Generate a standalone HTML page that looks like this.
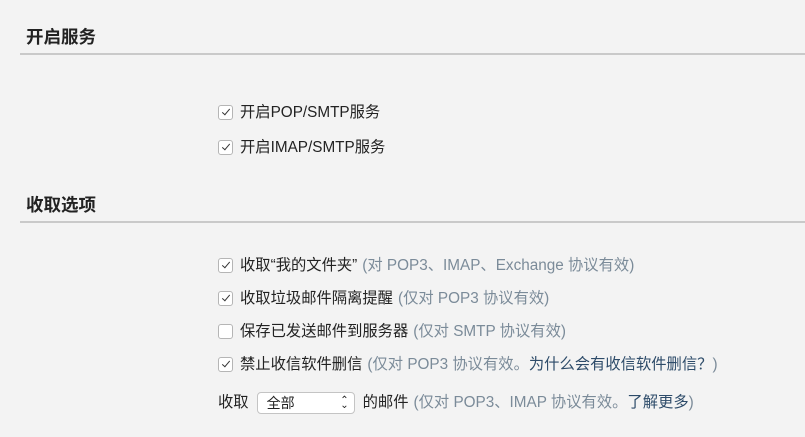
<!DOCTYPE html>
<html><head><meta charset="utf-8"><style>
body{margin:0;width:805px;height:437px;background:#f3f3f3;font-family:"Liberation Sans","Noto Sans CJK SC",sans-serif;color:#222;position:relative;overflow:hidden}
.h{position:absolute;left:26px;font-size:17.5px;font-weight:bold;line-height:20px}
.ln{position:absolute;left:20px;right:0;height:2px;background:#c9c9c9}
.r{position:absolute;left:218px;font-size:15.3px;line-height:20px;white-space:nowrap;display:flex;align-items:center}
.cb{width:15px;height:15px;border:1px solid #b5b5b5;border-radius:3px;background:#fff;margin-right:7px;position:relative;box-sizing:border-box;top:-1px}
.cb.c::after{content:"";position:absolute;left:4.5px;top:1.5px;width:3px;height:7px;border:solid #333;border-width:0 1.5px 1.5px 0;transform:rotate(40deg)}
.g{color:#7b8b99;margin-left:5px}
.a{color:#2d4b69}
.sel{display:inline-block;width:98px;height:22px;border:1px solid #c4c4c4;border-radius:4px;background:#fff;margin:0 8px 0 8px;box-sizing:border-box;font-size:14px;line-height:20px;padding-left:9px;position:relative}
.sel::after{content:"⌃";position:absolute;right:5px;top:-2px;font-size:10px}
.sel::before{content:"⌄";position:absolute;right:5px;top:3px;font-size:10px}
</style></head><body>
<div class="h" style="top:27px">开启服务</div>
<div class="ln" style="top:53px"></div>
<div class="r" style="top:103px"><span class="cb c"></span>开启POP/SMTP服务</div>
<div class="r" style="top:138px"><span class="cb c"></span>开启IMAP/SMTP服务</div>
<div class="h" style="top:195px">收取选项</div>
<div class="ln" style="top:221px"></div>
<div class="r" style="top:256px"><span class="cb c"></span>收取“我的文件夹”<span class="g">(对 POP3、IMAP、Exchange 协议有效)</span></div>
<div class="r" style="top:289px"><span class="cb c"></span>收取垃圾邮件隔离提醒<span class="g">(仅对 POP3 协议有效)</span></div>
<div class="r" style="top:322px"><span class="cb"></span>保存已发送邮件到服务器<span class="g">(仅对 SMTP 协议有效)</span></div>
<div class="r" style="top:355px"><span class="cb c"></span>禁止收信软件删信<span class="g">(仅对 POP3 协议有效。<span class="a">为什么会有收信软件删信？</span>)</span></div>
<div class="r" style="top:392px">收取<span class="sel">全部</span>的邮件<span class="g">(仅对 POP3、IMAP 协议有效。<span class="a">了解更多</span>)</span></div>
</body></html>
